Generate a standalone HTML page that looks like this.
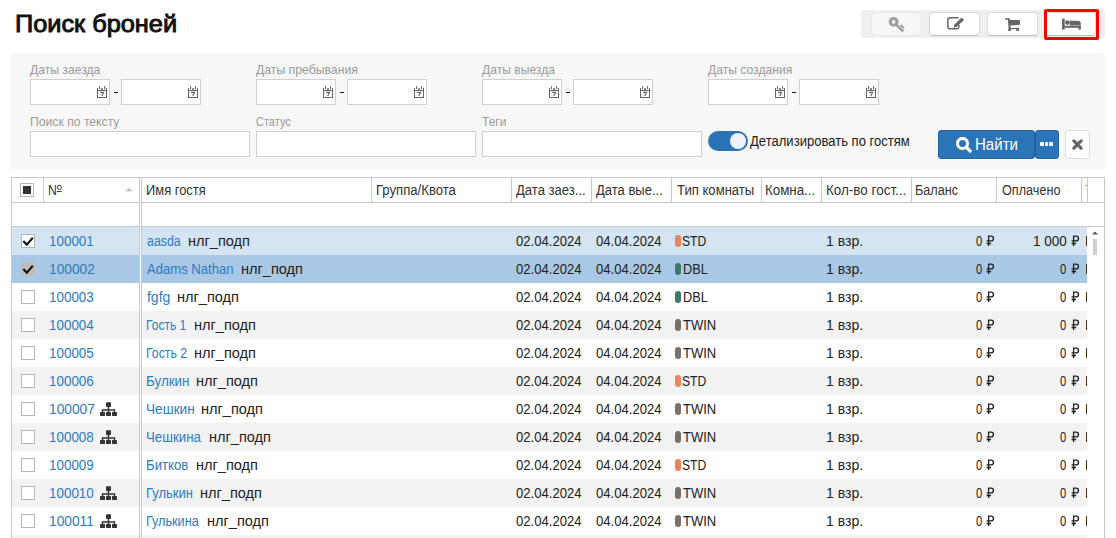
<!DOCTYPE html><html><head><meta charset="utf-8"><style>
*{box-sizing:border-box;margin:0;padding:0}
html,body{width:1116px;height:538px;overflow:hidden;background:#fff;font-family:"Liberation Sans",sans-serif;color:#222}
.a{position:absolute}
.x{position:absolute;white-space:nowrap;line-height:14px;transform-origin:0 0}
.tb{left:861px;top:10px;width:244px;height:28px;background:#efefef;border-radius:3px}
.tbtn{top:12px;width:51px;height:24px;background:#fff;border:1px solid #d9d9d9;border-bottom-color:#bcbcbc;border-radius:4px}
.tbtn.dis{background:#f6f6f6;border-color:#e6e6e6}
.red{left:1044px;top:9px;width:55px;height:31px;border:3px solid #f00;border-radius:2px}
.panel{left:11px;top:53px;width:1094px;height:116px;background:#f7f7f7;border-radius:3px}
.inp{height:26px;background:#fff;border:1px solid #cfcfcf}
.toggle{left:708px;top:131px;width:40px;height:20px;border-radius:10px;background:#2b73b6}
.knob{left:22px;top:2px;width:16px;height:16px;border-radius:8px;background:#eef4fa}
.btn{top:130px;height:29px;background:#2b74b8;border:1px solid #2461a0}
.grid{left:11px;top:177px;width:1094px;height:370px;border:1px solid #c8c8c8;background:#fff}
.vl{position:absolute;width:1px;background:#c8c8c8}
.hl{position:absolute;height:1px;background:#c8c8c8}
.rowbg{position:absolute;left:12px;width:1075px;height:28px}
.cb{position:absolute;width:14px;height:14px;border:1px solid #b5b5b5;background:#fff}
.pill{position:absolute;width:6px;height:12px;border-radius:3px}
</style></head><body>
<div class="a tb"></div>
<div class="a tbtn dis" style="left:871px"></div>
<div class="a tbtn" style="left:929px"></div>
<div class="a tbtn" style="left:987px"></div>
<div class="a tbtn" style="left:1045px"></div>
<svg class="a" style="left:884px;top:14px" width="26" height="22" viewBox="0 0 26 22"><circle cx="9.6" cy="7.8" r="3.4" fill="none" stroke="#9d9d9d" stroke-width="3"/><path d="M12.2 10.6L19.2 17.4" stroke="#9d9d9d" stroke-width="2.6"/><path d="M16.6 10.9L19.9 14.1" stroke="#9d9d9d" stroke-width="2"/></svg>
<svg class="a" style="left:946px;top:16px" width="20" height="16" viewBox="0 0 20 16"><path d="M12.4 1.85H3.6A1.75 1.75 0 0 0 1.85 3.6V11.1A1.75 1.75 0 0 0 3.6 12.85H11.1A1.75 1.75 0 0 0 12.85 11.1V9" fill="none" stroke="#666" stroke-width="1.5"/><path d="M7.6 11.7L8.4 8.4L15.7 1.6L18 4.1L10.8 10.8Z" fill="#666"/></svg>
<svg class="a" style="left:1000px;top:14px" width="26" height="22" viewBox="0 0 26 22" fill="#666"><rect x="5" y="4.3" width="4" height="1.5"/><path d="M7.9 4.5h2l1 12.3h-2.2z"/><path d="M9 6.1h11v4.6L10.3 11.6z"/><rect x="9.6" y="13.9" width="9.4" height="1.2"/><rect x="8.2" y="14.6" width="2.4" height="2.2"/><rect x="16.2" y="14" width="2.8" height="2.8"/></svg>
<svg class="a" style="left:1062px;top:18px" width="20" height="12" viewBox="0 0 20 12" fill="#666"><rect x="0" y="0.6" width="2.7" height="11"/><circle cx="5.4" cy="4.6" r="2.4"/><path d="M7.8 2.7h7.7a3 3 0 0 1 3.3 3v1.8H7.8z"/><rect x="2" y="7.8" width="16.8" height="2"/><rect x="16.3" y="7.8" width="2.5" height="3.8"/></svg>
<div class="a red"></div>
<div class="a panel"></div>
<div class="a inp" style="left:30px;top:79px;width:80px"></div>
<div class="a inp" style="left:121px;top:79px;width:80px"></div>
<svg class="a" style="left:97px;top:86px" width="10" height="12" viewBox="0 0 10 12" fill="#666"><rect x="0" y="2" width="1" height="10"/><rect x="9" y="2" width="1" height="10"/><rect x="0" y="4" width="10" height="1"/><rect x="0" y="11" width="10" height="1"/><rect x="2" y="0.2" width="1.1" height="3"/><rect x="7" y="0.2" width="1.1" height="3"/><rect x="4.3" y="2" width="1.5" height="2"/><path d="M3.1 6.3h3.5L4.7 10" fill="none" stroke="#666" stroke-width="1.2"/></svg>
<svg class="a" style="left:188px;top:86px" width="10" height="12" viewBox="0 0 10 12" fill="#666"><rect x="0" y="2" width="1" height="10"/><rect x="9" y="2" width="1" height="10"/><rect x="0" y="4" width="10" height="1"/><rect x="0" y="11" width="10" height="1"/><rect x="2" y="0.2" width="1.1" height="3"/><rect x="7" y="0.2" width="1.1" height="3"/><rect x="4.3" y="2" width="1.5" height="2"/><path d="M3.1 6.3h3.5L4.7 10" fill="none" stroke="#666" stroke-width="1.2"/></svg>
<div class="a" style="left:113.5px;top:92px;width:4px;height:1px;background:#111"></div>
<div class="a inp" style="left:256px;top:79px;width:80px"></div>
<div class="a inp" style="left:347px;top:79px;width:80px"></div>
<svg class="a" style="left:323px;top:86px" width="10" height="12" viewBox="0 0 10 12" fill="#666"><rect x="0" y="2" width="1" height="10"/><rect x="9" y="2" width="1" height="10"/><rect x="0" y="4" width="10" height="1"/><rect x="0" y="11" width="10" height="1"/><rect x="2" y="0.2" width="1.1" height="3"/><rect x="7" y="0.2" width="1.1" height="3"/><rect x="4.3" y="2" width="1.5" height="2"/><path d="M3.1 6.3h3.5L4.7 10" fill="none" stroke="#666" stroke-width="1.2"/></svg>
<svg class="a" style="left:414px;top:86px" width="10" height="12" viewBox="0 0 10 12" fill="#666"><rect x="0" y="2" width="1" height="10"/><rect x="9" y="2" width="1" height="10"/><rect x="0" y="4" width="10" height="1"/><rect x="0" y="11" width="10" height="1"/><rect x="2" y="0.2" width="1.1" height="3"/><rect x="7" y="0.2" width="1.1" height="3"/><rect x="4.3" y="2" width="1.5" height="2"/><path d="M3.1 6.3h3.5L4.7 10" fill="none" stroke="#666" stroke-width="1.2"/></svg>
<div class="a" style="left:339.5px;top:92px;width:4px;height:1px;background:#111"></div>
<div class="a inp" style="left:482px;top:79px;width:80px"></div>
<div class="a inp" style="left:573px;top:79px;width:80px"></div>
<svg class="a" style="left:549px;top:86px" width="10" height="12" viewBox="0 0 10 12" fill="#666"><rect x="0" y="2" width="1" height="10"/><rect x="9" y="2" width="1" height="10"/><rect x="0" y="4" width="10" height="1"/><rect x="0" y="11" width="10" height="1"/><rect x="2" y="0.2" width="1.1" height="3"/><rect x="7" y="0.2" width="1.1" height="3"/><rect x="4.3" y="2" width="1.5" height="2"/><path d="M3.1 6.3h3.5L4.7 10" fill="none" stroke="#666" stroke-width="1.2"/></svg>
<svg class="a" style="left:640px;top:86px" width="10" height="12" viewBox="0 0 10 12" fill="#666"><rect x="0" y="2" width="1" height="10"/><rect x="9" y="2" width="1" height="10"/><rect x="0" y="4" width="10" height="1"/><rect x="0" y="11" width="10" height="1"/><rect x="2" y="0.2" width="1.1" height="3"/><rect x="7" y="0.2" width="1.1" height="3"/><rect x="4.3" y="2" width="1.5" height="2"/><path d="M3.1 6.3h3.5L4.7 10" fill="none" stroke="#666" stroke-width="1.2"/></svg>
<div class="a" style="left:565.5px;top:92px;width:4px;height:1px;background:#111"></div>
<div class="a inp" style="left:708px;top:79px;width:80px"></div>
<div class="a inp" style="left:799px;top:79px;width:80px"></div>
<svg class="a" style="left:775px;top:86px" width="10" height="12" viewBox="0 0 10 12" fill="#666"><rect x="0" y="2" width="1" height="10"/><rect x="9" y="2" width="1" height="10"/><rect x="0" y="4" width="10" height="1"/><rect x="0" y="11" width="10" height="1"/><rect x="2" y="0.2" width="1.1" height="3"/><rect x="7" y="0.2" width="1.1" height="3"/><rect x="4.3" y="2" width="1.5" height="2"/><path d="M3.1 6.3h3.5L4.7 10" fill="none" stroke="#666" stroke-width="1.2"/></svg>
<svg class="a" style="left:866px;top:86px" width="10" height="12" viewBox="0 0 10 12" fill="#666"><rect x="0" y="2" width="1" height="10"/><rect x="9" y="2" width="1" height="10"/><rect x="0" y="4" width="10" height="1"/><rect x="0" y="11" width="10" height="1"/><rect x="2" y="0.2" width="1.1" height="3"/><rect x="7" y="0.2" width="1.1" height="3"/><rect x="4.3" y="2" width="1.5" height="2"/><path d="M3.1 6.3h3.5L4.7 10" fill="none" stroke="#666" stroke-width="1.2"/></svg>
<div class="a" style="left:791.5px;top:92px;width:4px;height:1px;background:#111"></div>
<div class="a inp" style="left:30px;top:131px;width:220px"></div>
<div class="a inp" style="left:256px;top:131px;width:220px"></div>
<div class="a inp" style="left:482px;top:131px;width:220px"></div>
<div class="a toggle"><div class="a knob"></div></div>
<div class="a" style="left:937px;top:129px;width:123px;height:31px;border-radius:4px;background:#fff"></div>
<div class="a btn" style="left:938px;width:97px;border-radius:3px"></div>
<div class="a btn" style="left:1035px;width:24px;border-radius:3px"></div>
<svg class="a" style="left:956px;top:137px" width="16" height="16" viewBox="0 0 16 16"><circle cx="6.5" cy="6.4" r="5" fill="none" stroke="#fff" stroke-width="3"/><path d="M10.6 10.5l3.6 3.6" stroke="#fff" stroke-width="3.2" stroke-linecap="round"/></svg>
<div class="a" style="left:1040px;top:142px;width:3.8px;height:4px;background:#fff;border-radius:0.8px"></div>
<div class="a" style="left:1044.6px;top:142px;width:3.8px;height:4px;background:#fff;border-radius:0.8px"></div>
<div class="a" style="left:1049.2px;top:142px;width:3.8px;height:4px;background:#fff;border-radius:0.8px"></div>
<div class="a" style="left:1065px;top:130px;width:25px;height:29px;background:#fff;border:1px solid #dcdcdc;border-radius:4px"></div>
<svg class="a" style="left:1072px;top:139px" width="11" height="11" viewBox="0 0 11 11"><path d="M1.9 1.9l7.2 7.2M9.1 1.9l-7.2 7.2" stroke="#666" stroke-width="3.2" stroke-linecap="round"/></svg>
<div class="a grid"></div>
<div class="hl" style="left:12px;top:202px;width:1092px"></div>
<div class="hl" style="left:12px;top:226px;width:1092px"></div>
<div class="vl" style="left:43px;top:178px;height:24px"></div>
<div class="vl" style="left:371px;top:178px;height:24px"></div>
<div class="vl" style="left:511px;top:178px;height:24px"></div>
<div class="vl" style="left:591px;top:178px;height:24px"></div>
<div class="vl" style="left:671px;top:178px;height:24px"></div>
<div class="vl" style="left:761px;top:178px;height:24px"></div>
<div class="vl" style="left:821px;top:178px;height:24px"></div>
<div class="vl" style="left:911px;top:178px;height:24px"></div>
<div class="vl" style="left:996px;top:178px;height:24px"></div>
<div class="vl" style="left:1081px;top:178px;height:24px"></div>
<div class="vl" style="left:1087px;top:178px;height:24px"></div>
<div class="a" style="left:1086px;top:185px;width:1px;height:1px;background:#b0602a"></div>
<div class="a" style="left:20px;top:183px;width:14px;height:14px;border:1px solid #b5b5b5;background:#fff"></div>
<div class="a" style="left:23px;top:186px;width:8px;height:8px;background:#333"></div>
<svg class="a" style="left:56px;top:184px" width="7" height="9" viewBox="0 0 7 9"><ellipse cx="3.4" cy="3.4" rx="2.0" ry="2.1" fill="none" stroke="#333" stroke-width="1.0"/><rect x="1" y="7" width="4.6" height="1" fill="#333"/></svg>
<svg class="a" style="left:125px;top:187px" width="8" height="5" viewBox="0 0 8 5"><path d="M0.2 4.3L4 0.9 7.8 4.3z" fill="#bbb"/></svg>
<div class="rowbg" style="top:227px;background:#d4e4f2"></div>
<div class="cb" style="left:21px;top:234px;"></div>
<svg class="a" style="left:22px;top:236px" width="12" height="11" viewBox="0 0 12 11"><path d="M1.3 5l3.5 3.6L10.8 1.8" fill="none" stroke="#111" stroke-width="2.1"/></svg>
<div class="pill" style="left:675px;top:235px;background:#e9845b"></div>
<svg class="a" style="left:986px;top:235px" width="9" height="12" viewBox="0 0 9 12"><path d="M2.6 0.4V11M2 1.1H5.1A2.4 2.4 0 0 1 5.1 5.9H0.6M0.6 8.5H5.1" fill="none" stroke="#222" stroke-width="1.35"/></svg>
<svg class="a" style="left:1071px;top:235px" width="9" height="12" viewBox="0 0 9 12"><path d="M2.6 0.4V11M2 1.1H5.1A2.4 2.4 0 0 1 5.1 5.9H0.6M0.6 8.5H5.1" fill="none" stroke="#222" stroke-width="1.35"/></svg>
<div class="a" style="left:1086px;top:236px;width:1.3px;height:10px;background:#5a2e10"></div>
<div class="rowbg" style="top:255px;background:#a9c8e5"></div>
<div class="cb" style="left:21px;top:262px;background:#bdbdbd;border-color:#bdbdbd;"></div>
<svg class="a" style="left:22px;top:264px" width="12" height="11" viewBox="0 0 12 11"><path d="M1.3 5l3.5 3.6L10.8 1.8" fill="none" stroke="#111" stroke-width="2.1"/></svg>
<div class="pill" style="left:675px;top:263px;background:#3e7866"></div>
<svg class="a" style="left:986px;top:263px" width="9" height="12" viewBox="0 0 9 12"><path d="M2.6 0.4V11M2 1.1H5.1A2.4 2.4 0 0 1 5.1 5.9H0.6M0.6 8.5H5.1" fill="none" stroke="#222" stroke-width="1.35"/></svg>
<svg class="a" style="left:1071px;top:263px" width="9" height="12" viewBox="0 0 9 12"><path d="M2.6 0.4V11M2 1.1H5.1A2.4 2.4 0 0 1 5.1 5.9H0.6M0.6 8.5H5.1" fill="none" stroke="#222" stroke-width="1.35"/></svg>
<div class="a" style="left:1086px;top:264px;width:1.3px;height:10px;background:#5a2e10"></div>
<div class="rowbg" style="top:283px;background:#ffffff"></div>
<div class="cb" style="left:21px;top:290px;"></div>
<div class="pill" style="left:675px;top:291px;background:#3e7866"></div>
<svg class="a" style="left:986px;top:291px" width="9" height="12" viewBox="0 0 9 12"><path d="M2.6 0.4V11M2 1.1H5.1A2.4 2.4 0 0 1 5.1 5.9H0.6M0.6 8.5H5.1" fill="none" stroke="#222" stroke-width="1.35"/></svg>
<svg class="a" style="left:1071px;top:291px" width="9" height="12" viewBox="0 0 9 12"><path d="M2.6 0.4V11M2 1.1H5.1A2.4 2.4 0 0 1 5.1 5.9H0.6M0.6 8.5H5.1" fill="none" stroke="#222" stroke-width="1.35"/></svg>
<div class="a" style="left:1086px;top:292px;width:1.3px;height:10px;background:#5a2e10"></div>
<div class="rowbg" style="top:311px;background:#f2f2f2"></div>
<div class="cb" style="left:21px;top:318px;"></div>
<div class="pill" style="left:675px;top:319px;background:#7b7067"></div>
<svg class="a" style="left:986px;top:319px" width="9" height="12" viewBox="0 0 9 12"><path d="M2.6 0.4V11M2 1.1H5.1A2.4 2.4 0 0 1 5.1 5.9H0.6M0.6 8.5H5.1" fill="none" stroke="#222" stroke-width="1.35"/></svg>
<svg class="a" style="left:1071px;top:319px" width="9" height="12" viewBox="0 0 9 12"><path d="M2.6 0.4V11M2 1.1H5.1A2.4 2.4 0 0 1 5.1 5.9H0.6M0.6 8.5H5.1" fill="none" stroke="#222" stroke-width="1.35"/></svg>
<div class="a" style="left:1086px;top:320px;width:1.3px;height:10px;background:#5a2e10"></div>
<div class="rowbg" style="top:339px;background:#ffffff"></div>
<div class="cb" style="left:21px;top:346px;"></div>
<div class="pill" style="left:675px;top:347px;background:#7b7067"></div>
<svg class="a" style="left:986px;top:347px" width="9" height="12" viewBox="0 0 9 12"><path d="M2.6 0.4V11M2 1.1H5.1A2.4 2.4 0 0 1 5.1 5.9H0.6M0.6 8.5H5.1" fill="none" stroke="#222" stroke-width="1.35"/></svg>
<svg class="a" style="left:1071px;top:347px" width="9" height="12" viewBox="0 0 9 12"><path d="M2.6 0.4V11M2 1.1H5.1A2.4 2.4 0 0 1 5.1 5.9H0.6M0.6 8.5H5.1" fill="none" stroke="#222" stroke-width="1.35"/></svg>
<div class="a" style="left:1086px;top:348px;width:1.3px;height:10px;background:#5a2e10"></div>
<div class="rowbg" style="top:367px;background:#f2f2f2"></div>
<div class="cb" style="left:21px;top:374px;"></div>
<div class="pill" style="left:675px;top:375px;background:#e9845b"></div>
<svg class="a" style="left:986px;top:375px" width="9" height="12" viewBox="0 0 9 12"><path d="M2.6 0.4V11M2 1.1H5.1A2.4 2.4 0 0 1 5.1 5.9H0.6M0.6 8.5H5.1" fill="none" stroke="#222" stroke-width="1.35"/></svg>
<svg class="a" style="left:1071px;top:375px" width="9" height="12" viewBox="0 0 9 12"><path d="M2.6 0.4V11M2 1.1H5.1A2.4 2.4 0 0 1 5.1 5.9H0.6M0.6 8.5H5.1" fill="none" stroke="#222" stroke-width="1.35"/></svg>
<div class="a" style="left:1086px;top:376px;width:1.3px;height:10px;background:#5a2e10"></div>
<div class="rowbg" style="top:395px;background:#ffffff"></div>
<div class="cb" style="left:21px;top:402px;"></div>
<svg class="a" style="left:100px;top:402px" width="17" height="14" viewBox="0 0 17 14" fill="#333"><rect x="6" y="0.3" width="5" height="4.6" rx="0.6"/><rect x="7.7" y="4.5" width="1.5" height="3"/><path d="M2.5 10V8h12V10M8.45 7.6V10" fill="none" stroke="#333" stroke-width="1.4"/><rect x="0" y="9.9" width="5" height="4" rx="0.6"/><rect x="6" y="9.9" width="5" height="4" rx="0.6"/><rect x="12" y="9.9" width="5" height="4" rx="0.6"/></svg>
<div class="pill" style="left:675px;top:403px;background:#7b7067"></div>
<svg class="a" style="left:986px;top:403px" width="9" height="12" viewBox="0 0 9 12"><path d="M2.6 0.4V11M2 1.1H5.1A2.4 2.4 0 0 1 5.1 5.9H0.6M0.6 8.5H5.1" fill="none" stroke="#222" stroke-width="1.35"/></svg>
<svg class="a" style="left:1071px;top:403px" width="9" height="12" viewBox="0 0 9 12"><path d="M2.6 0.4V11M2 1.1H5.1A2.4 2.4 0 0 1 5.1 5.9H0.6M0.6 8.5H5.1" fill="none" stroke="#222" stroke-width="1.35"/></svg>
<div class="a" style="left:1086px;top:404px;width:1.3px;height:10px;background:#5a2e10"></div>
<div class="rowbg" style="top:423px;background:#f2f2f2"></div>
<div class="cb" style="left:21px;top:430px;"></div>
<svg class="a" style="left:100px;top:430px" width="17" height="14" viewBox="0 0 17 14" fill="#333"><rect x="6" y="0.3" width="5" height="4.6" rx="0.6"/><rect x="7.7" y="4.5" width="1.5" height="3"/><path d="M2.5 10V8h12V10M8.45 7.6V10" fill="none" stroke="#333" stroke-width="1.4"/><rect x="0" y="9.9" width="5" height="4" rx="0.6"/><rect x="6" y="9.9" width="5" height="4" rx="0.6"/><rect x="12" y="9.9" width="5" height="4" rx="0.6"/></svg>
<div class="pill" style="left:675px;top:431px;background:#7b7067"></div>
<svg class="a" style="left:986px;top:431px" width="9" height="12" viewBox="0 0 9 12"><path d="M2.6 0.4V11M2 1.1H5.1A2.4 2.4 0 0 1 5.1 5.9H0.6M0.6 8.5H5.1" fill="none" stroke="#222" stroke-width="1.35"/></svg>
<svg class="a" style="left:1071px;top:431px" width="9" height="12" viewBox="0 0 9 12"><path d="M2.6 0.4V11M2 1.1H5.1A2.4 2.4 0 0 1 5.1 5.9H0.6M0.6 8.5H5.1" fill="none" stroke="#222" stroke-width="1.35"/></svg>
<div class="a" style="left:1086px;top:432px;width:1.3px;height:10px;background:#5a2e10"></div>
<div class="rowbg" style="top:451px;background:#ffffff"></div>
<div class="cb" style="left:21px;top:458px;"></div>
<div class="pill" style="left:675px;top:459px;background:#e9845b"></div>
<svg class="a" style="left:986px;top:459px" width="9" height="12" viewBox="0 0 9 12"><path d="M2.6 0.4V11M2 1.1H5.1A2.4 2.4 0 0 1 5.1 5.9H0.6M0.6 8.5H5.1" fill="none" stroke="#222" stroke-width="1.35"/></svg>
<svg class="a" style="left:1071px;top:459px" width="9" height="12" viewBox="0 0 9 12"><path d="M2.6 0.4V11M2 1.1H5.1A2.4 2.4 0 0 1 5.1 5.9H0.6M0.6 8.5H5.1" fill="none" stroke="#222" stroke-width="1.35"/></svg>
<div class="a" style="left:1086px;top:460px;width:1.3px;height:10px;background:#5a2e10"></div>
<div class="rowbg" style="top:479px;background:#f2f2f2"></div>
<div class="cb" style="left:21px;top:486px;"></div>
<svg class="a" style="left:100px;top:486px" width="17" height="14" viewBox="0 0 17 14" fill="#333"><rect x="6" y="0.3" width="5" height="4.6" rx="0.6"/><rect x="7.7" y="4.5" width="1.5" height="3"/><path d="M2.5 10V8h12V10M8.45 7.6V10" fill="none" stroke="#333" stroke-width="1.4"/><rect x="0" y="9.9" width="5" height="4" rx="0.6"/><rect x="6" y="9.9" width="5" height="4" rx="0.6"/><rect x="12" y="9.9" width="5" height="4" rx="0.6"/></svg>
<div class="pill" style="left:675px;top:487px;background:#7b7067"></div>
<svg class="a" style="left:986px;top:487px" width="9" height="12" viewBox="0 0 9 12"><path d="M2.6 0.4V11M2 1.1H5.1A2.4 2.4 0 0 1 5.1 5.9H0.6M0.6 8.5H5.1" fill="none" stroke="#222" stroke-width="1.35"/></svg>
<svg class="a" style="left:1071px;top:487px" width="9" height="12" viewBox="0 0 9 12"><path d="M2.6 0.4V11M2 1.1H5.1A2.4 2.4 0 0 1 5.1 5.9H0.6M0.6 8.5H5.1" fill="none" stroke="#222" stroke-width="1.35"/></svg>
<div class="a" style="left:1086px;top:488px;width:1.3px;height:10px;background:#5a2e10"></div>
<div class="rowbg" style="top:507px;background:#ffffff"></div>
<div class="cb" style="left:21px;top:514px;"></div>
<svg class="a" style="left:100px;top:514px" width="17" height="14" viewBox="0 0 17 14" fill="#333"><rect x="6" y="0.3" width="5" height="4.6" rx="0.6"/><rect x="7.7" y="4.5" width="1.5" height="3"/><path d="M2.5 10V8h12V10M8.45 7.6V10" fill="none" stroke="#333" stroke-width="1.4"/><rect x="0" y="9.9" width="5" height="4" rx="0.6"/><rect x="6" y="9.9" width="5" height="4" rx="0.6"/><rect x="12" y="9.9" width="5" height="4" rx="0.6"/></svg>
<div class="pill" style="left:675px;top:515px;background:#7b7067"></div>
<svg class="a" style="left:986px;top:515px" width="9" height="12" viewBox="0 0 9 12"><path d="M2.6 0.4V11M2 1.1H5.1A2.4 2.4 0 0 1 5.1 5.9H0.6M0.6 8.5H5.1" fill="none" stroke="#222" stroke-width="1.35"/></svg>
<svg class="a" style="left:1071px;top:515px" width="9" height="12" viewBox="0 0 9 12"><path d="M2.6 0.4V11M2 1.1H5.1A2.4 2.4 0 0 1 5.1 5.9H0.6M0.6 8.5H5.1" fill="none" stroke="#222" stroke-width="1.35"/></svg>
<div class="a" style="left:1086px;top:516px;width:1.3px;height:10px;background:#5a2e10"></div>
<div class="rowbg" style="top:535px;background:#f2f2f2"></div>
<div class="cb" style="left:21px;top:542px;"></div>
<div class="pill" style="left:675px;top:543px;background:#e9845b"></div>
<svg class="a" style="left:986px;top:543px" width="9" height="12" viewBox="0 0 9 12"><path d="M2.6 0.4V11M2 1.1H5.1A2.4 2.4 0 0 1 5.1 5.9H0.6M0.6 8.5H5.1" fill="none" stroke="#222" stroke-width="1.35"/></svg>
<svg class="a" style="left:1071px;top:543px" width="9" height="12" viewBox="0 0 9 12"><path d="M2.6 0.4V11M2 1.1H5.1A2.4 2.4 0 0 1 5.1 5.9H0.6M0.6 8.5H5.1" fill="none" stroke="#222" stroke-width="1.35"/></svg>
<div class="a" style="left:1086px;top:544px;width:1.3px;height:10px;background:#5a2e10"></div>
<div class="x" style="left:14.89px;top:9px;font-size:24px;color:#111;transform:scaleX(1.0547);-webkit-text-stroke:0.95px #111;line-height:30px">Поиск броней</div>
<div class="x" style="left:30.20px;top:63px;font-size:13px;color:#9a9a9a;transform:scaleX(0.9333)">Даты заезда</div>
<div class="x" style="left:255.90px;top:63px;font-size:13px;color:#9a9a9a;transform:scaleX(0.9407)">Даты пребывания</div>
<div class="x" style="left:482.30px;top:63px;font-size:13px;color:#9a9a9a;transform:scaleX(0.9308)">Даты выезда</div>
<div class="x" style="left:708.30px;top:63px;font-size:13px;color:#9a9a9a;transform:scaleX(0.9322)">Даты создания</div>
<div class="x" style="left:29.56px;top:115px;font-size:13px;color:#9a9a9a;transform:scaleX(0.9368)">Поиск по тексту</div>
<div class="x" style="left:256.40px;top:115px;font-size:13px;color:#9a9a9a;transform:scaleX(0.8463)">Статус</div>
<div class="x" style="left:482.00px;top:115px;font-size:13px;color:#9a9a9a;transform:scaleX(0.9231)">Теги</div>
<div class="x" style="left:750.00px;top:134px;font-size:14px;color:#222;transform:scaleX(0.9322)">Детализировать по гостям</div>
<div class="x" style="left:974.86px;top:138px;font-size:16px;color:#fff;transform:scaleX(0.9409)">Найти</div>
<div class="x" style="left:48.12px;top:183px;font-size:14px;color:#333;transform:scaleX(0.8750)">N</div>
<div class="x" style="left:145.88px;top:183px;font-size:14px;color:#333;transform:scaleX(0.9222)">Имя гостя</div>
<div class="x" style="left:375.56px;top:183px;font-size:14px;color:#333;transform:scaleX(0.9376)">Группа/Квота</div>
<div class="x" style="left:515.70px;top:183px;font-size:14px;color:#333;transform:scaleX(0.9338)">Дата заез...</div>
<div class="x" style="left:595.70px;top:183px;font-size:14px;color:#333;transform:scaleX(0.9296)">Дата вые...</div>
<div class="x" style="left:676.50px;top:183px;font-size:14px;color:#333;transform:scaleX(0.9354)">Тип комнаты</div>
<div class="x" style="left:765.35px;top:183px;font-size:14px;color:#333;transform:scaleX(0.9510)">Комна...</div>
<div class="x" style="left:825.54px;top:183px;font-size:14px;color:#333;transform:scaleX(0.9610)">Кол-во гост...</div>
<div class="x" style="left:915.40px;top:183px;font-size:14px;color:#333;transform:scaleX(0.9043)">Баланс</div>
<div class="x" style="left:1001.60px;top:183px;font-size:14px;color:#333;transform:scaleX(0.9046)">Оплачено</div>
<div class="x" style="left:48.84px;top:234px;font-size:14px;color:#2f7bbf;transform:scaleX(0.9587)">100001</div>
<div class="x" style="left:147.30px;top:234px;font-size:14px;color:#2f7bbf;transform:scaleX(0.8842)">aasda</div>
<div class="x" style="left:187.86px;top:234px;font-size:14px;color:#222;transform:scaleX(1.0397)">нлг_подп</div>
<div class="x" style="left:516.40px;top:234px;font-size:14px;color:#222;transform:scaleX(0.9357)">02.04.2024</div>
<div class="x" style="left:596.40px;top:234px;font-size:14px;color:#222;transform:scaleX(0.9357)">04.04.2024</div>
<div class="x" style="left:682.43px;top:234px;font-size:14px;color:#222;transform:scaleX(0.8667)">STD</div>
<div class="x" style="left:825.90px;top:234px;font-size:14px;color:#222;transform:scaleX(1.0029)">1 взр.</div>
<div class="x" style="left:975.60px;top:234px;font-size:14px;color:#222;transform:scaleX(0.8000)">0</div>
<div class="x" style="left:1033.34px;top:234px;font-size:14px;color:#222;transform:scaleX(0.9647)">1 000</div>
<div class="x" style="left:48.82px;top:262px;font-size:14px;color:#2f7bbf;transform:scaleX(0.9800)">100002</div>
<div class="x" style="left:147.30px;top:262px;font-size:14px;color:#2f7bbf;transform:scaleX(0.9337)">Adams Nathan</div>
<div class="x" style="left:240.56px;top:262px;font-size:14px;color:#222;transform:scaleX(1.0397)">нлг_подп</div>
<div class="x" style="left:516.40px;top:262px;font-size:14px;color:#222;transform:scaleX(0.9357)">02.04.2024</div>
<div class="x" style="left:596.40px;top:262px;font-size:14px;color:#222;transform:scaleX(0.9357)">04.04.2024</div>
<div class="x" style="left:682.84px;top:262px;font-size:14px;color:#222;transform:scaleX(0.9135)">DBL</div>
<div class="x" style="left:825.90px;top:262px;font-size:14px;color:#222;transform:scaleX(1.0029)">1 взр.</div>
<div class="x" style="left:975.60px;top:262px;font-size:14px;color:#222;transform:scaleX(0.8000)">0</div>
<div class="x" style="left:1060.30px;top:262px;font-size:14px;color:#222;transform:scaleX(0.8000)">0</div>
<div class="x" style="left:48.84px;top:290px;font-size:14px;color:#2f7bbf;transform:scaleX(0.9587)">100003</div>
<div class="x" style="left:147.30px;top:290px;font-size:14px;color:#2f7bbf;transform:scaleX(0.9957)">fgfg</div>
<div class="x" style="left:177.46px;top:290px;font-size:14px;color:#222;transform:scaleX(1.0397)">нлг_подп</div>
<div class="x" style="left:516.40px;top:290px;font-size:14px;color:#222;transform:scaleX(0.9357)">02.04.2024</div>
<div class="x" style="left:596.40px;top:290px;font-size:14px;color:#222;transform:scaleX(0.9357)">04.04.2024</div>
<div class="x" style="left:682.84px;top:290px;font-size:14px;color:#222;transform:scaleX(0.9135)">DBL</div>
<div class="x" style="left:825.90px;top:290px;font-size:14px;color:#222;transform:scaleX(1.0029)">1 взр.</div>
<div class="x" style="left:975.60px;top:290px;font-size:14px;color:#222;transform:scaleX(0.8000)">0</div>
<div class="x" style="left:1060.30px;top:290px;font-size:14px;color:#222;transform:scaleX(0.8000)">0</div>
<div class="x" style="left:48.84px;top:318px;font-size:14px;color:#2f7bbf;transform:scaleX(0.9587)">100004</div>
<div class="x" style="left:146.44px;top:318px;font-size:14px;color:#2f7bbf;transform:scaleX(0.8609)">Гость 1</div>
<div class="x" style="left:194.16px;top:318px;font-size:14px;color:#222;transform:scaleX(1.0397)">нлг_подп</div>
<div class="x" style="left:516.40px;top:318px;font-size:14px;color:#222;transform:scaleX(0.9357)">02.04.2024</div>
<div class="x" style="left:596.40px;top:318px;font-size:14px;color:#222;transform:scaleX(0.9357)">04.04.2024</div>
<div class="x" style="left:682.90px;top:318px;font-size:14px;color:#222;transform:scaleX(0.9286)">TWIN</div>
<div class="x" style="left:825.90px;top:318px;font-size:14px;color:#222;transform:scaleX(1.0029)">1 взр.</div>
<div class="x" style="left:975.60px;top:318px;font-size:14px;color:#222;transform:scaleX(0.8000)">0</div>
<div class="x" style="left:1060.30px;top:318px;font-size:14px;color:#222;transform:scaleX(0.8000)">0</div>
<div class="x" style="left:48.84px;top:346px;font-size:14px;color:#2f7bbf;transform:scaleX(0.9587)">100005</div>
<div class="x" style="left:146.42px;top:346px;font-size:14px;color:#2f7bbf;transform:scaleX(0.8800)">Гость 2</div>
<div class="x" style="left:194.16px;top:346px;font-size:14px;color:#222;transform:scaleX(1.0397)">нлг_подп</div>
<div class="x" style="left:516.40px;top:346px;font-size:14px;color:#222;transform:scaleX(0.9357)">02.04.2024</div>
<div class="x" style="left:596.40px;top:346px;font-size:14px;color:#222;transform:scaleX(0.9357)">04.04.2024</div>
<div class="x" style="left:682.90px;top:346px;font-size:14px;color:#222;transform:scaleX(0.9286)">TWIN</div>
<div class="x" style="left:825.90px;top:346px;font-size:14px;color:#222;transform:scaleX(1.0029)">1 взр.</div>
<div class="x" style="left:975.60px;top:346px;font-size:14px;color:#222;transform:scaleX(0.8000)">0</div>
<div class="x" style="left:1060.30px;top:346px;font-size:14px;color:#222;transform:scaleX(0.8000)">0</div>
<div class="x" style="left:48.84px;top:374px;font-size:14px;color:#2f7bbf;transform:scaleX(0.9587)">100006</div>
<div class="x" style="left:146.34px;top:374px;font-size:14px;color:#2f7bbf;transform:scaleX(0.9568)">Булкин</div>
<div class="x" style="left:196.26px;top:374px;font-size:14px;color:#222;transform:scaleX(1.0397)">нлг_подп</div>
<div class="x" style="left:516.40px;top:374px;font-size:14px;color:#222;transform:scaleX(0.9357)">02.04.2024</div>
<div class="x" style="left:596.40px;top:374px;font-size:14px;color:#222;transform:scaleX(0.9357)">04.04.2024</div>
<div class="x" style="left:682.43px;top:374px;font-size:14px;color:#222;transform:scaleX(0.8667)">STD</div>
<div class="x" style="left:825.90px;top:374px;font-size:14px;color:#222;transform:scaleX(1.0029)">1 взр.</div>
<div class="x" style="left:975.60px;top:374px;font-size:14px;color:#222;transform:scaleX(0.8000)">0</div>
<div class="x" style="left:1060.30px;top:374px;font-size:14px;color:#222;transform:scaleX(0.8000)">0</div>
<div class="x" style="left:48.82px;top:402px;font-size:14px;color:#2f7bbf;transform:scaleX(0.9800)">100007</div>
<div class="x" style="left:146.33px;top:402px;font-size:14px;color:#2f7bbf;transform:scaleX(0.9750)">Чешкин</div>
<div class="x" style="left:201.46px;top:402px;font-size:14px;color:#222;transform:scaleX(1.0397)">нлг_подп</div>
<div class="x" style="left:516.40px;top:402px;font-size:14px;color:#222;transform:scaleX(0.9357)">02.04.2024</div>
<div class="x" style="left:596.40px;top:402px;font-size:14px;color:#222;transform:scaleX(0.9357)">04.04.2024</div>
<div class="x" style="left:682.90px;top:402px;font-size:14px;color:#222;transform:scaleX(0.9286)">TWIN</div>
<div class="x" style="left:825.90px;top:402px;font-size:14px;color:#222;transform:scaleX(1.0029)">1 взр.</div>
<div class="x" style="left:975.60px;top:402px;font-size:14px;color:#222;transform:scaleX(0.8000)">0</div>
<div class="x" style="left:1060.30px;top:402px;font-size:14px;color:#222;transform:scaleX(0.8000)">0</div>
<div class="x" style="left:48.84px;top:430px;font-size:14px;color:#2f7bbf;transform:scaleX(0.9587)">100008</div>
<div class="x" style="left:146.35px;top:430px;font-size:14px;color:#2f7bbf;transform:scaleX(0.9491)">Чешкина</div>
<div class="x" style="left:208.66px;top:430px;font-size:14px;color:#222;transform:scaleX(1.0397)">нлг_подп</div>
<div class="x" style="left:516.40px;top:430px;font-size:14px;color:#222;transform:scaleX(0.9357)">02.04.2024</div>
<div class="x" style="left:596.40px;top:430px;font-size:14px;color:#222;transform:scaleX(0.9357)">04.04.2024</div>
<div class="x" style="left:682.90px;top:430px;font-size:14px;color:#222;transform:scaleX(0.9286)">TWIN</div>
<div class="x" style="left:825.90px;top:430px;font-size:14px;color:#222;transform:scaleX(1.0029)">1 взр.</div>
<div class="x" style="left:975.60px;top:430px;font-size:14px;color:#222;transform:scaleX(0.8000)">0</div>
<div class="x" style="left:1060.30px;top:430px;font-size:14px;color:#222;transform:scaleX(0.8000)">0</div>
<div class="x" style="left:48.84px;top:458px;font-size:14px;color:#2f7bbf;transform:scaleX(0.9587)">100009</div>
<div class="x" style="left:146.36px;top:458px;font-size:14px;color:#2f7bbf;transform:scaleX(0.9409)">Битков</div>
<div class="x" style="left:195.66px;top:458px;font-size:14px;color:#222;transform:scaleX(1.0397)">нлг_подп</div>
<div class="x" style="left:516.40px;top:458px;font-size:14px;color:#222;transform:scaleX(0.9357)">02.04.2024</div>
<div class="x" style="left:596.40px;top:458px;font-size:14px;color:#222;transform:scaleX(0.9357)">04.04.2024</div>
<div class="x" style="left:682.43px;top:458px;font-size:14px;color:#222;transform:scaleX(0.8667)">STD</div>
<div class="x" style="left:825.90px;top:458px;font-size:14px;color:#222;transform:scaleX(1.0029)">1 взр.</div>
<div class="x" style="left:975.60px;top:458px;font-size:14px;color:#222;transform:scaleX(0.8000)">0</div>
<div class="x" style="left:1060.30px;top:458px;font-size:14px;color:#222;transform:scaleX(0.8000)">0</div>
<div class="x" style="left:48.84px;top:486px;font-size:14px;color:#2f7bbf;transform:scaleX(0.9587)">100010</div>
<div class="x" style="left:146.37px;top:486px;font-size:14px;color:#2f7bbf;transform:scaleX(0.9286)">Гулькин</div>
<div class="x" style="left:199.56px;top:486px;font-size:14px;color:#222;transform:scaleX(1.0397)">нлг_подп</div>
<div class="x" style="left:516.40px;top:486px;font-size:14px;color:#222;transform:scaleX(0.9357)">02.04.2024</div>
<div class="x" style="left:596.40px;top:486px;font-size:14px;color:#222;transform:scaleX(0.9357)">04.04.2024</div>
<div class="x" style="left:682.90px;top:486px;font-size:14px;color:#222;transform:scaleX(0.9286)">TWIN</div>
<div class="x" style="left:825.90px;top:486px;font-size:14px;color:#222;transform:scaleX(1.0029)">1 взр.</div>
<div class="x" style="left:975.60px;top:486px;font-size:14px;color:#222;transform:scaleX(0.8000)">0</div>
<div class="x" style="left:1060.30px;top:486px;font-size:14px;color:#222;transform:scaleX(0.8000)">0</div>
<div class="x" style="left:48.82px;top:514px;font-size:14px;color:#2f7bbf;transform:scaleX(0.9800)">100011</div>
<div class="x" style="left:146.39px;top:514px;font-size:14px;color:#2f7bbf;transform:scaleX(0.9052)">Гулькина</div>
<div class="x" style="left:206.66px;top:514px;font-size:14px;color:#222;transform:scaleX(1.0397)">нлг_подп</div>
<div class="x" style="left:516.40px;top:514px;font-size:14px;color:#222;transform:scaleX(0.9357)">02.04.2024</div>
<div class="x" style="left:596.40px;top:514px;font-size:14px;color:#222;transform:scaleX(0.9357)">04.04.2024</div>
<div class="x" style="left:682.90px;top:514px;font-size:14px;color:#222;transform:scaleX(0.9286)">TWIN</div>
<div class="x" style="left:825.90px;top:514px;font-size:14px;color:#222;transform:scaleX(1.0029)">1 взр.</div>
<div class="x" style="left:975.60px;top:514px;font-size:14px;color:#222;transform:scaleX(0.8000)">0</div>
<div class="x" style="left:1060.30px;top:514px;font-size:14px;color:#222;transform:scaleX(0.8000)">0</div>
<div class="x" style="left:48.82px;top:542px;font-size:14px;color:#2f7bbf;transform:scaleX(0.9800)">100012</div>
<div class="x" style="left:147.30px;top:542px;font-size:14px;color:#2f7bbf;transform:scaleX(0.7842)">Сидоров</div>
<div class="x" style="left:198.96px;top:542px;font-size:14px;color:#222;transform:scaleX(1.0397)">нлг_подп</div>
<div class="x" style="left:516.40px;top:542px;font-size:14px;color:#222;transform:scaleX(0.9357)">02.04.2024</div>
<div class="x" style="left:596.40px;top:542px;font-size:14px;color:#222;transform:scaleX(0.9357)">04.04.2024</div>
<div class="x" style="left:682.43px;top:542px;font-size:14px;color:#222;transform:scaleX(0.8667)">STD</div>
<div class="x" style="left:825.90px;top:542px;font-size:14px;color:#222;transform:scaleX(1.0029)">1 взр.</div>
<div class="x" style="left:975.60px;top:542px;font-size:14px;color:#222;transform:scaleX(0.8000)">0</div>
<div class="x" style="left:1060.30px;top:542px;font-size:14px;color:#222;transform:scaleX(0.8000)">0</div>
<div class="vl" style="left:139px;top:178px;height:360px"></div>
<div class="a" style="left:140px;top:178px;width:1px;height:360px;background:#fff"></div>
<div class="vl" style="left:141px;top:178px;height:360px"></div>
<div class="a" style="left:1087px;top:227px;width:17px;height:311px;background:#fff"></div>
<svg class="a" style="left:1092px;top:231px" width="6" height="4" viewBox="0 0 6 4"><path d="M0 3.5L3 0.5 6 3.5z" fill="#555"/></svg>
<div class="a" style="left:1093px;top:239px;width:4px;height:16px;background:#cfcfcf"></div>
</body></html>
